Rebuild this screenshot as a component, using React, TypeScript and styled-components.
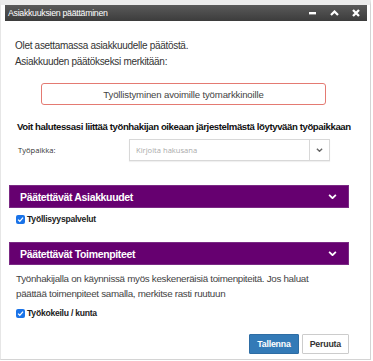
import React from "react";
import styled, { createGlobalStyle } from "styled-components";

const Global = createGlobalStyle`
  html, body { margin: 0; padding: 0; background: #fff; }
  body { font-family: "Liberation Sans", Arial, sans-serif; }
`;

const Frame = styled.div`
  width: 371px;
  height: 360px;
  box-sizing: border-box;
  border: 1px solid #d4d4d4;
  border-left-color: #e6e6e6;
  border-top: 5px solid #ececec;
  padding: 0 3px 0 4px;
  display: flex;
  flex-direction: column;
  background: #fff;
`;

const TitleBar = styled.div`
  height: 16px;
  background: linear-gradient(#5a5a5a, #3c3c3c);
  display: flex;
  align-items: center;
  padding: 0 0 0 3px;
  color: #fff;
  font-size: 8.8px;
  letter-spacing: -0.3px;
`;

const Title = styled.span`
  flex: 1;
`;

const TitleIcon = styled.span`
  width: 22px;
  display: flex;
  justify-content: center;
  align-items: center;
`;

const Body = styled.div`
  flex: 1;
  display: flex;
  flex-direction: column;
`;

const Para = styled.p<{ $top?: number }>`
  margin: ${(p) => p.$top ?? 0}px 0 0 10px;
  font-size: 10px;
  letter-spacing: -0.3px;
  color: #333;
  line-height: 15px;
`;

const Decision = styled.div`
  margin: 14px 0 0 36px;
  width: 285px;
  height: 22px;
  box-sizing: border-box;
  border: 1px solid #e47a72;
  border-radius: 3px;
  display: flex;
  align-items: center;
  justify-content: center;
  font-size: 9.6px;
  letter-spacing: -0.15px;
  color: #444;
`;

const Heading = styled.div`
  margin: 15px 0 0 12px;
  font-weight: 700;
  font-size: 9.6px;
  letter-spacing: -0.4px;
  line-height: 13px;
  color: #111;
  white-space: nowrap;
`;

const FieldRow = styled.div`
  display: flex;
  align-items: center;
  margin: 6px 0 0 13px;
`;

const FieldLabel = styled.label`
  width: 111px;
  font-family: "Open Sans", sans-serif;
  font-size: 7.6px;
  color: #333;
`;

const Combo = styled.div`
  width: 201px;
  height: 22px;
  box-sizing: border-box;
  border: 1px solid #d8d8d8;
  display: flex;
  box-shadow: 0 1px 1px rgba(0, 0, 0, 0.06);
`;

const ComboInput = styled.div`
  flex: 1;
  display: flex;
  align-items: center;
  padding-left: 6px;
  font-family: "Open Sans", sans-serif;
  font-size: 7.6px;
  color: #aaa;
`;

const ComboButton = styled.div`
  width: 19px;
  border-left: 1px solid #d8d8d8;
  display: flex;
  align-items: center;
  justify-content: center;
`;

const Section = styled.div<{ $top: number }>`
  margin: ${(p) => p.$top}px 0 0 4px;
  width: 340px;
  height: 23px;
  box-sizing: border-box;
  background: #660070;
  border: 1px solid #7a2a84;
  display: flex;
  align-items: center;
  padding: 0 11px 0 10px;
  color: #fff;
  font-weight: 700;
  font-size: 10.5px;
  letter-spacing: -0.35px;
`;

const SectionTitle = styled.span`
  flex: 1;
`;

const CheckRow = styled.label<{ $top: number }>`
  display: flex;
  align-items: center;
  margin: ${(p) => p.$top}px 0 0 11px;
  height: 12px;
  font-weight: 700;
  font-size: 8.6px;
  letter-spacing: -0.25px;
  color: #222;
  gap: 2px;
`;

const Box = styled.span`
  width: 9px;
  height: 9px;
  border-radius: 2px;
  background: #1a73e8;
  display: flex;
  align-items: center;
  justify-content: center;
`;

const Text = styled.p`
  margin: 6px 0 0 11px;
  font-size: 9.8px;
  letter-spacing: -0.3px;
  line-height: 15px;
  color: #444;
  width: 322px;
`;

const Actions = styled.div`
  margin-top: auto;
  margin-bottom: 5px;
  display: flex;
  justify-content: flex-end;
  gap: 3px;
  padding-right: 18px;
`;

const Btn = styled.button<{ $primary?: boolean }>`
  height: 20px;
  box-sizing: border-box;
  padding: 0 7px;
  font-family: inherit;
  font-size: 8.8px;
  letter-spacing: -0.2px;
  font-weight: 700;
  border-radius: 1px;
  border: 1px solid ${(p) => (p.$primary ? "#2e6da4" : "#ccc")};
  background: ${(p) => (p.$primary ? "#337ab7" : "#fff")};
  color: ${(p) => (p.$primary ? "#fff" : "#333")};
  min-width: ${(p) => (p.$primary ? 48 : 46)}px;
`;

const Check = () => (
  <Box>
    <svg width="7" height="7" viewBox="0 0 10 10">
      <path d="M1.5 5.2 L4 7.6 L8.6 2.4" fill="none" stroke="#fff" strokeWidth="1.9" />
    </svg>
  </Box>
);

const Chevron = ({ color, w = 9 }: { color: string; w?: number }) => (
  <svg width={w} height={w * 0.6} viewBox="0 0 12 7">
    <path d="M1.5 1.2 L6 5.5 L10.5 1.2" fill="none" stroke={color} strokeWidth="2.4" />
  </svg>
);

export default function App() {
  return (
    <>
      <Global />
      <Frame>
        <TitleBar>
          <Title>Asiakkuuksien päättäminen</Title>
          <TitleIcon>
            <svg width="7" height="3" viewBox="0 0 7 3"><rect width="7" height="2.4" fill="#fff" /></svg>
          </TitleIcon>
          <TitleIcon>
            <svg width="9" height="6" viewBox="0 0 9 6"><path d="M1 5 L4.5 1.5 L8 5" fill="none" stroke="#fff" strokeWidth="2.2" /></svg>
          </TitleIcon>
          <TitleIcon>
            <svg width="8" height="8" viewBox="0 0 8 8"><path d="M1 1 L7 7 M7 1 L1 7" stroke="#fff" strokeWidth="2.3" /></svg>
          </TitleIcon>
        </TitleBar>
        <Body>
          <Para $top={17}>Olet asettamassa asiakkuudelle päätöstä.</Para>
          <Para $top={1}>Asiakkuuden päätökseksi merkitään:</Para>
          <Decision>Työllistyminen avoimille työmarkkinoille</Decision>
          <Heading>Voit halutessasi liittää työnhakijan oikeaan järjestelmästä löytyvään työpaikkaan</Heading>
          <FieldRow>
            <FieldLabel>Työpaikka:</FieldLabel>
            <Combo>
              <ComboInput>Kirjoita hakusana</ComboInput>
              <ComboButton>
                <Chevron color="#666" w={7} />
              </ComboButton>
            </Combo>
          </FieldRow>
          <Section $top={24}>
            <SectionTitle>Päätettävät Asiakkuudet</SectionTitle>
            <Chevron color="#fff" />
          </Section>
          <CheckRow $top={5}>
            <Check />
            Työllisyyspalvelut
          </CheckRow>
          <Section $top={17}>
            <SectionTitle>Päätettävät Toimenpiteet</SectionTitle>
            <Chevron color="#fff" />
          </Section>
          <Text>Työnhakijalla on käynnissä myös keskeneräisiä toimenpiteitä. Jos haluat päättää toimenpiteet samalla, merkitse rasti ruutuun</Text>
          <CheckRow $top={6}>
            <Check />
            Työkokeilu / kunta
          </CheckRow>
          <Actions>
            <Btn $primary>Tallenna</Btn>
            <Btn>Peruuta</Btn>
          </Actions>
        </Body>
      </Frame>
    </>
  );
}
